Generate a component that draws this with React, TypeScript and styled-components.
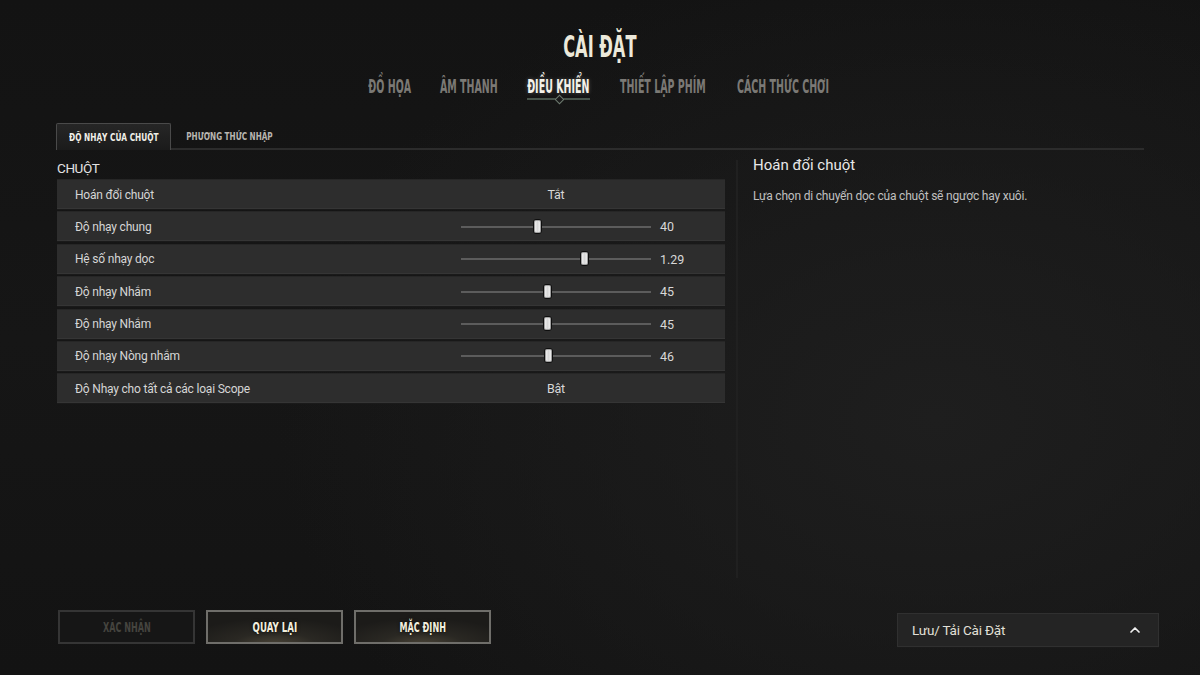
import React from 'react';
import styled, { createGlobalStyle } from 'styled-components';
import { ChevronUp } from 'lucide-react';

const GlobalStyle = createGlobalStyle`
  html, body {
    margin: 0;
    padding: 0;
    background: #141414;
  }
  * {
    box-sizing: border-box;
  }
`;

// no condensed face is installed, so headings are squeezed horizontally
const headFont = `'DejaVu Sans', 'Liberation Sans', sans-serif`;
const body = `Roboto, 'Noto Sans', sans-serif`;

const Page = styled.div`
  width: 1200px;
  height: 675px;
  overflow: hidden;
  display: flex;
  flex-direction: column;
  background:
    radial-gradient(ellipse 55% 70% at 78% 62%, #1e1e1e 0%, rgba(20, 20, 20, 0) 100%),
    linear-gradient(180deg, #131313 0%, #161616 50%, #131313 100%);
  font-family: ${body};
`;

const Squeeze = styled.span<{ $x: number }>`
  display: inline-block;
  white-space: nowrap;
  transform: scaleX(${p => p.$x});
  transform-origin: center;
`;

const Header = styled.header`
  display: flex;
  flex-direction: column;
  align-items: center;
  padding-top: 30px;
`;

const Title = styled.h1`
  margin: 0;
  display: flex;
  justify-content: center;
  width: 74px;
  font-family: ${headFont};
  font-weight: 700;
  font-size: 30px;
  line-height: 34px;
  color: #ece9da;
`;

const NavTabs = styled.nav`
  display: flex;
  gap: 29px;
  margin-top: 10px;
`;

const NavTab = styled.div<{ $active?: boolean; $w: number }>`
  position: relative;
  display: flex;
  justify-content: center;
  width: ${p => p.$w}px;
  height: 28px;
  font-family: ${headFont};
  font-weight: 700;
  font-size: 19px;
  line-height: 24px;
  color: ${p => (p.$active ? '#f4f2ea' : '#7b7975')};
  text-shadow: ${p => (p.$active ? '0 0 6px rgba(255,255,255,0.25)' : 'none')};
`;

const Underline = styled.span`
  position: absolute;
  left: 0;
  right: 0;
  bottom: 2px;
  height: 2px;
  background: #48544b;

  &::after {
    content: '';
    position: absolute;
    left: 50%;
    top: -2px;
    width: 5px;
    height: 5px;
    margin-left: -3px;
    transform: rotate(45deg);
    border: 1px solid #6e7b70;
    background: #1a1a1a;
  }
`;

const Main = styled.main`
  padding: 0 56px;
  margin-top: 22px;
  display: flex;
  flex-direction: column;
`;

const SubTabs = styled.div`
  display: flex;
  align-items: flex-end;
  gap: 2px;
  height: 26px;
  border-bottom: 2px solid #2c2c2c;
`;

const SubTab = styled.div<{ $active?: boolean; $w: number }>`
  width: ${p => p.$w}px;
  height: ${p => (p.$active ? '27px' : '25px')};
  margin-bottom: ${p => (p.$active ? '-2px' : '0')};
  display: flex;
  align-items: center;
  justify-content: center;
  font-family: ${headFont};
  font-weight: 700;
  font-size: 11px;
  color: ${p => (p.$active ? '#f0efe8' : '#b8b6b0')};
  background: ${p => (p.$active ? 'linear-gradient(180deg, #262626, #1b1b1b)' : 'transparent')};
  border: ${p => (p.$active ? '1px solid #4a4a4a' : '1px solid transparent')};
  border-bottom: none;
  border-radius: 2px 2px 0 0;
`;

const Content = styled.div`
  display: grid;
  grid-template-columns: 670px 1fr;
  margin-top: 10px;
`;

const LeftCol = styled.section`
  display: flex;
  flex-direction: column;
`;

const GroupLabel = styled.div`
  font-size: 13.5px;
  letter-spacing: -0.4px;
  line-height: 17px;
  color: #e2e2e2;
  margin-bottom: 2px;
  padding-left: 1px;
`;

const Rows = styled.div`
  display: flex;
  flex-direction: column;
  gap: 2.4px;
`;

const Row = styled.div`
  display: grid;
  grid-template-columns: 386px 190px 1fr;
  align-items: center;
  height: 30px;
  margin: 0 1px;
  padding-left: 18px;
  background: #2d2d2d;
  border-top: 1px solid #262626;
  box-shadow: inset 0 -1px 0 #353535, 0 1px 0 #1a1a1a;
`;

const RowLabel = styled.span`
  font-size: 12px;
  letter-spacing: -0.2px;
  color: #d6d6d6;
  white-space: nowrap;
`;

const ToggleValue = styled.span`
  text-align: center;
  font-size: 12.5px;
  letter-spacing: -0.3px;
  color: #d8d8d8;
`;

const Track = styled.div`
  position: relative;
  height: 2px;
  background: #5c5c5c;
`;

const Thumb = styled.span`
  position: absolute;
  top: -7px;
  width: 9px;
  height: 15px;
  margin-left: -4px;
  border-radius: 3px;
  background: linear-gradient(90deg, #f6f6f6, #d8d8d8 50%, #f6f6f6);
  border: 1px solid #0e0e0e;
  box-shadow: 0 0 0 1px #a0a0a0 inset;
`;

const SliderValue = styled.span`
  padding-left: 9px;
  font-size: 12.5px;
  color: #d8d8d8;
`;

const RightCol = styled.aside`
  display: flex;
  flex-direction: column;
  border-left: 2px solid #202020;
  margin-left: 10px;
  height: 418px;
  padding-left: 15px;
`;

const InfoTitle = styled.div`
  font-size: 15px;
  line-height: 18px;
  color: #e8e8e8;
  margin-top: -4px;
`;

const InfoText = styled.div`
  font-size: 12px;
  letter-spacing: -0.2px;
  color: #c0c0c0;
  margin-top: 15px;
`;

const Footer = styled.footer`
  margin-top: auto;
  display: flex;
  align-items: flex-start;
  justify-content: space-between;
  padding: 0 41px 28px 58px;
`;

const ButtonGroup = styled.div`
  display: flex;
  gap: 11px;
`;

const Button = styled.button<{ $disabled?: boolean }>`
  width: 137px;
  height: 34px;
  display: flex;
  align-items: center;
  justify-content: center;
  font-family: ${headFont};
  font-weight: 700;
  font-size: 13.5px;
  color: ${p => (p.$disabled ? '#45443f' : '#f2eedd')};
  border: 2px solid ${p => (p.$disabled ? '#353535' : '#6f6e6a')};
  background: ${p =>
    p.$disabled
      ? '#161616'
      : 'radial-gradient(ellipse 70% 90% at 50% 110%, #4b4538 0%, #2a2823 45%, #1c1b19 100%)'};
  text-shadow: ${p => (p.$disabled ? 'none' : '0 0 4px rgba(0,0,0,0.8)')};
  padding: 0;
  cursor: pointer;
`;

const Dropdown = styled.div`
  width: 262px;
  height: 34px;
  margin-top: 3px;
  display: flex;
  align-items: center;
  justify-content: space-between;
  padding: 0 15px 0 14px;
  background: #242424;
  border: 1px solid #303030;
  box-shadow: 0 1px 0 #1a1a1a;
  font-size: 13.5px;
  letter-spacing: -0.2px;
  color: #e2e0d8;
`;

type Setting =
  | { label: string; kind: 'toggle'; value: string }
  | { label: string; kind: 'slider'; value: string; pos: number };

const settings: Setting[] = [
  { label: 'Hoán đổi chuột', kind: 'toggle', value: 'Tắt' },
  { label: 'Độ nhạy chung', kind: 'slider', value: '40', pos: 76 },
  { label: 'Hệ số nhạy dọc', kind: 'slider', value: '1.29', pos: 123 },
  { label: 'Độ nhạy Nhắm', kind: 'slider', value: '45', pos: 86 },
  { label: 'Độ nhạy Nhắm', kind: 'slider', value: '45', pos: 86 },
  { label: 'Độ nhạy Nòng nhắm', kind: 'slider', value: '46', pos: 87 },
  { label: 'Độ Nhạy cho tất cả các loại Scope', kind: 'toggle', value: 'Bật' },
];

const tabs = [
  { name: 'ĐỒ HỌA', w: 42 },
  { name: 'ÂM THANH', w: 58 },
  { name: 'ĐIỀU KHIỂN', w: 63 },
  { name: 'THIẾT LẬP PHÍM', w: 87 },
  { name: 'CÁCH THỨC CHƠI', w: 96 },
];

const App = () => {
  return (
    <Page>
      <GlobalStyle />
      <Header>
        <Title>
          <Squeeze $x={0.54}>CÀI ĐẶT</Squeeze>
        </Title>
        <NavTabs>
          {tabs.map(t => (
            <NavTab key={t.name} $w={t.w} $active={t.name === 'ĐIỀU KHIỂN'}>
              <Squeeze $x={0.5}>{t.name}</Squeeze>
              {t.name === 'ĐIỀU KHIỂN' && <Underline />}
            </NavTab>
          ))}
        </NavTabs>
      </Header>

      <Main>
        <SubTabs>
          <SubTab $active $w={115}>
            <Squeeze $x={0.67}>ĐỘ NHẠY CỦA CHUỘT</Squeeze>
          </SubTab>
          <SubTab $w={112}>
            <Squeeze $x={0.66}>PHƯƠNG THỨC NHẬP</Squeeze>
          </SubTab>
        </SubTabs>

        <Content>
          <LeftCol>
            <GroupLabel>CHUỘT</GroupLabel>
            <Rows>
              {settings.map((s, i) => (
                <Row key={i}>
                  <RowLabel>{s.label}</RowLabel>
                  {s.kind === 'toggle' ? (
                    <ToggleValue>{s.value}</ToggleValue>
                  ) : (
                    <>
                      <Track>
                        <Thumb style={{ left: `${s.pos}px` }} />
                      </Track>
                      <SliderValue>{s.value}</SliderValue>
                    </>
                  )}
                </Row>
              ))}
            </Rows>
          </LeftCol>

          <RightCol>
            <InfoTitle>Hoán đổi chuột</InfoTitle>
            <InfoText>Lựa chọn di chuyển dọc của chuột sẽ ngược hay xuôi.</InfoText>
          </RightCol>
        </Content>
      </Main>

      <Footer>
        <ButtonGroup>
          <Button $disabled>
            <Squeeze $x={0.6}>XÁC NHẬN</Squeeze>
          </Button>
          <Button>
            <Squeeze $x={0.64}>QUAY LẠI</Squeeze>
          </Button>
          <Button>
            <Squeeze $x={0.6}>MẶC ĐỊNH</Squeeze>
          </Button>
        </ButtonGroup>
        <Dropdown>
          <span>Lưu/ Tải Cài Đặt</span>
          <ChevronUp size={16} strokeWidth={2.6} color="#f0f0f0" />
        </Dropdown>
      </Footer>
    </Page>
  );
};

export default App;
